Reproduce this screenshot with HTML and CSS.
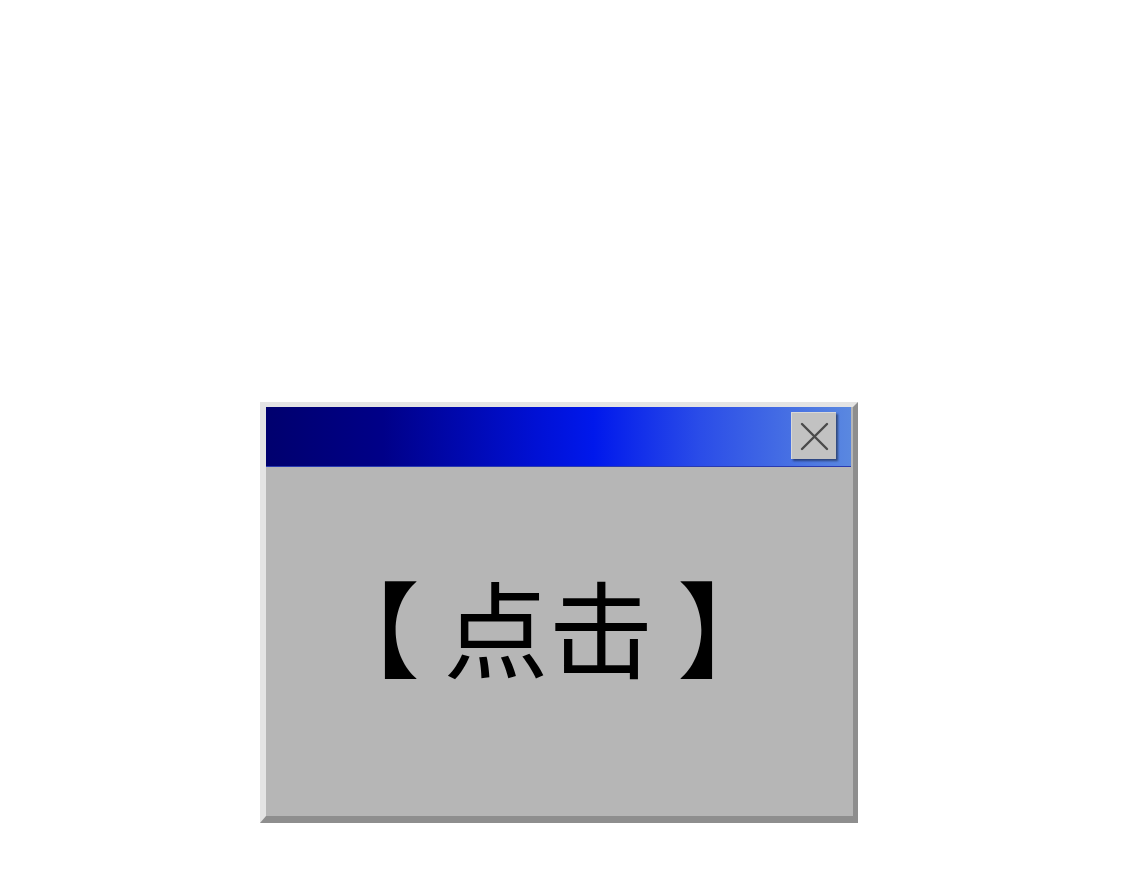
FILE: index.html
```html
<!DOCTYPE html>
<html lang="zh-CN">
<head>
    <meta charset="UTF-8">
    <meta name="viewport" content="width=device-width, initial-scale=1.0">
    <title>点击</title>
    <link rel="stylesheet" href="styles.css">
</head>
<body>
    <div class="window">
        <div class="title-bar">
            <button class="close-button" aria-label="关闭">
                <svg width="31" height="31" viewBox="0 0 31 31">
                    <path d="M3 3 L28 28 M28 3 L3 28" stroke="#4a4a4a" stroke-width="2.4" stroke-linecap="round" fill="none"/>
                </svg>
            </button>
        </div>
        <div class="window-body">
            <span class="click-text">【 点击 】</span>
        </div>
    </div>
</body>
</html>
```

FILE: styles.css
```css
body {
    margin: 0;
    padding: 0;
    background-color: #fff;
    font-family: 'Noto Sans CJK SC', 'Noto Sans', sans-serif;
}
.window {
    width: 598px;
    height: 421px;
    box-sizing: border-box;
    margin: 402px 0 0 260px;
    display: flex;
    flex-direction: column;
    background-color: #b6b6b6;
    border-left: 6px solid #e4e4e4;
    border-top: 5px solid #e4e4e4;
    border-right: 5px solid #8e8e8e;
    border-bottom: 7px solid #8e8e8e;
}
.title-bar {
    height: 60px;
    margin-right: 2px;
    display: flex;
    justify-content: flex-end;
    align-items: flex-start;
    padding: 5px 15px 0 0;
    box-sizing: border-box;
    background: linear-gradient(to right, #00006e 0%, #000088 20%, #0010d4 46%, #0018ec 56%, #2a4ce8 74%, #5a88e0 100%);
    border-bottom: 1px solid #2a3ab0;
}
.close-button {
    width: 45px;
    height: 47px;
    padding: 0;
    display: flex;
    align-items: center;
    justify-content: center;
    background-color: #c2c2c2;
    border: none;
    border-top: 1px solid #d8d8d8;
    border-left: 1px solid #d8d8d8;
    box-shadow: 2px 2px 2px rgba(0, 0, 0, 0.45);
    cursor: pointer;
}
.window-body {
    flex: 1;
    display: flex;
    justify-content: center;
    align-items: center;
    padding-bottom: 34px;
}
.click-text {
    font-size: 105px;
    line-height: 1;
    color: #000;
    white-space: pre;
    margin-right: 22px;
}
```
